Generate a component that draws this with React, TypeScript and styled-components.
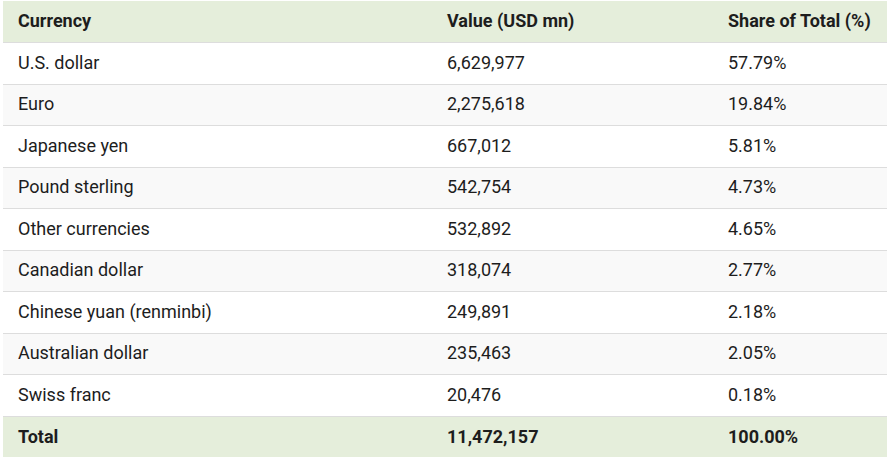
import React from 'react'
import styled, { createGlobalStyle } from 'styled-components'

const GlobalStyle = createGlobalStyle`
	body {
		margin: 0;
		background: #fff;
		font-family: Roboto, 'Liberation Sans', sans-serif;
	}
`

const Wrapper = styled.div`
	padding: 1px 0 0 3px;
`

const Table = styled.table`
	width: 884px;
	border-collapse: collapse;
	font-size: 18px;
	color: #1d1d1d;
	col:nth-child(1) { width: 429px; }
	col:nth-child(2) { width: 281px; }
	col:nth-child(3) { width: 174px; }
`

const Row = styled.tr<{ $shade: 'head' | 'odd' | 'even' }>`
	height: 41.5px;
	background-color: ${p => p.$shade === 'head' ? '#e5eedb' : p.$shade === 'even' ? '#f9f9f9' : '#ffffff'};
	border-bottom: 1px solid #dddddd;
	&:last-child { border-bottom: none; }
`

const Cell = styled.td<{ $bold?: boolean }>`
	padding: 0 15px 1px;
	line-height: 20px;
	text-align: left;
	vertical-align: middle;
	white-space: nowrap;
	font-weight: ${p => p.$bold ? 700 : 400};
`

const rows: [string, string, string][] = [
	['U.S. dollar', '6,629,977', '57.79%'],
	['Euro', '2,275,618', '19.84%'],
	['Japanese yen', '667,012', '5.81%'],
	['Pound sterling', '542,754', '4.73%'],
	['Other currencies', '532,892', '4.65%'],
	['Canadian dollar', '318,074', '2.77%'],
	['Chinese yuan (renminbi)', '249,891', '2.18%'],
	['Australian dollar', '235,463', '2.05%'],
	['Swiss franc', '20,476', '0.18%'],
]

export default function App() {
	return (
		<>
			<GlobalStyle />
			<Wrapper>
				<Table>
					<colgroup><col /><col /><col /></colgroup>
					<tbody>
						<Row $shade="head">
							<Cell $bold>Currency</Cell>
							<Cell $bold>Value (USD mn)</Cell>
							<Cell $bold>Share of Total (%)</Cell>
						</Row>
						{rows.map((r, i) => (
							<Row key={r[0]} $shade={i % 2 === 0 ? 'odd' : 'even'}>
								<Cell>{r[0]}</Cell>
								<Cell>{r[1]}</Cell>
								<Cell>{r[2]}</Cell>
							</Row>
						))}
						<Row $shade="head">
							<Cell $bold>Total</Cell>
							<Cell $bold>11,472,157</Cell>
							<Cell $bold>100.00%</Cell>
						</Row>
					</tbody>
				</Table>
			</Wrapper>
		</>
	)
}
